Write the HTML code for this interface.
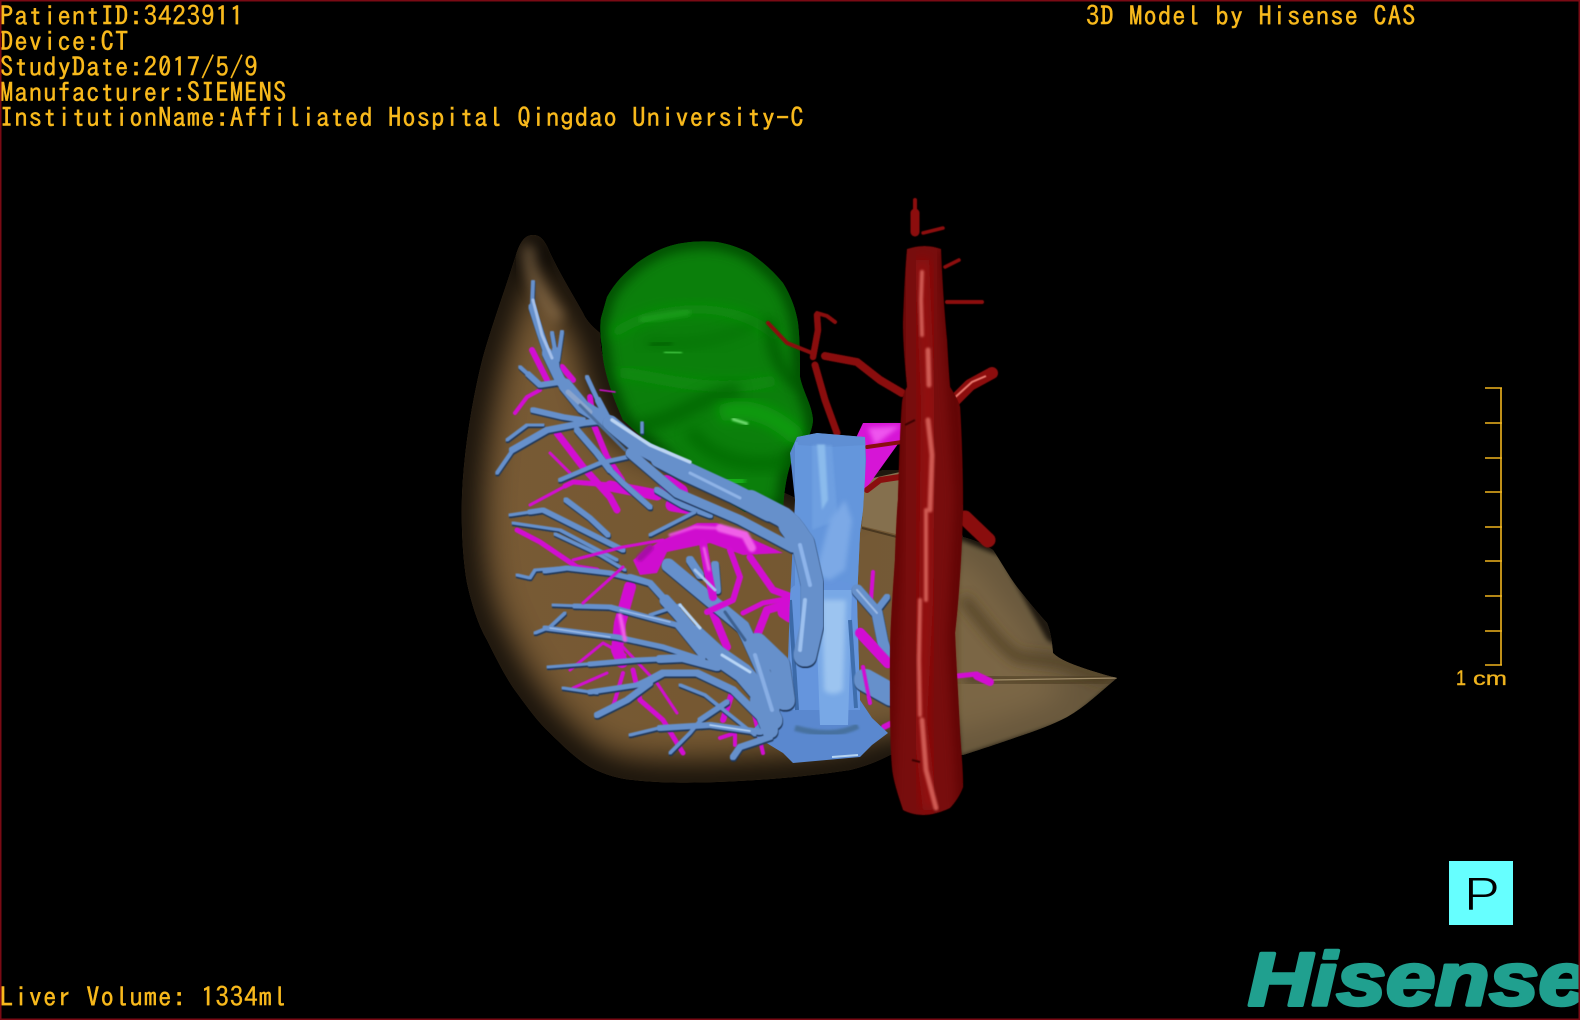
<!DOCTYPE html>
<html lang="en">
<head>
<meta charset="utf-8">
<title>3D Model by Hisense CAS</title>
<style>
html,body{margin:0;padding:0;background:#000;width:1580px;height:1020px;overflow:hidden}
svg{display:block}
.t{font-family:"IPAGothic","Liberation Mono",monospace;font-size:26.5px;letter-spacing:1.12px;fill:#f8b91c;stroke:#f8b91c;stroke-width:.45px}
</style>
</head>
<body>
<svg xmlns="http://www.w3.org/2000/svg" width="1580" height="1020" viewBox="0 0 1580 1020">
<defs>
<filter id="s" x="-10%" y="-10%" width="120%" height="120%"><feGaussianBlur stdDeviation=".55"/></filter>
<filter id="fat" x="-5%" y="-5%" width="110%" height="110%"><feMorphology operator="dilate" radius="1"/><feGaussianBlur stdDeviation=".6"/></filter>
<filter id="b1" x="-20%" y="-20%" width="140%" height="140%"><feGaussianBlur stdDeviation="1"/></filter>
<filter id="b2" x="-30%" y="-30%" width="160%" height="160%"><feGaussianBlur stdDeviation="2.5"/></filter>
<filter id="b5" x="-40%" y="-40%" width="180%" height="180%"><feGaussianBlur stdDeviation="6"/></filter>
<filter id="b10" x="-30%" y="-30%" width="160%" height="160%"><feGaussianBlur stdDeviation="17"/></filter>
<linearGradient id="lg" x1="0" x2="1" y1="0" y2="0">
<stop offset="0" stop-color="#785a35"/><stop offset=".45" stop-color="#755831"/><stop offset=".75" stop-color="#735a38"/><stop offset="1" stop-color="#7d6847"/>
</linearGradient>
<path id="liver" d="M533 235C525 235 520 242 516 255C505 290 492 325 483 357C472 400 464 450 462 495C461 530 463 560 467 583C473 610 480 628 487 640C497 660 507 680 517 693C528 708 538 722 550 733C565 748 578 760 590 767C605 775 620 779 633 780C660 783 690 783 717 782C770 780 810 776 850 770C870 765 880 760 890 755L963 755C985 748 1000 743 1017 737C1035 731 1052 725 1067 717C1085 707 1100 692 1117 678C1105 675 1095 672 1083 668C1072 664 1060 660 1053 653C1052 640 1050 630 1047 623C1035 610 1025 597 1017 587C1008 575 1000 560 993 550C985 545 975 540 963 537L940 480L900 470L883 470L860 478L800 500L623 420C612 390 600 360 600 333C590 325 585 318 583 313C570 290 558 270 550 253C545 240 540 235 533 235Z"/>
<clipPath id="cl"><use href="#liver"/></clipPath>
<path id="green" d="M607 297C615 282 626 272 637 263C652 252 668 245 683 243C695 241 706 241 717 242C729 244 740 248 750 253C763 262 774 272 783 283C791 296 796 310 798 323C800 340 800 360 800 377C803 392 812 405 813 420C812 435 803 447 793 457C787 472 784 490 783 510L745 512L690 480L623 420C612 395 603 370 602 347C600 335 600 325 601 318Z"/>
<clipPath id="cg"><use href="#green"/></clipPath>
<path id="red" d="M907 249Q925 243 941 249C942 280 945 320 947 340C948 360 949 375 950 387C955 395 958 400 960 407C962 440 963 480 963 510C962 540 960 590 955 633C956 660 958 690 960 733C961 750 963 770 963 787C960 795 955 803 950 808C942 812 932 815 923 815C916 815 908 813 903 810C898 795 893 780 892 767C890 740 890 700 890 660C890 630 893 590 895 560C896 530 897 510 898 500C899 470 900 430 902 403C903 395 905 390 907 387C905 365 903 340 903 323C904 300 905 270 907 249Z"/>
<clipPath id="cr"><use href="#red"/></clipPath>
<path id="ivc" d="M797 437L817 433L865 437L866 460L863 510L860 533L857 600L860 700L872 718L888 733L872 745L860 757L793 763L783 753L750 733L780 700L787 690L790 600L795 500L790 453Z"/>
<clipPath id="ci"><use href="#ivc"/></clipPath>
<g id="veins" fill="none" stroke-linecap="round" stroke-linejoin="round">
<path stroke-width="2" d="M533 282L532 307L540 332"/>
<path stroke-width="5" d="M532 307L540 332L547 353"/>
<path stroke-width="8" d="M547 353L560 380L583 407"/>
<path stroke-width="11" d="M565 385L583 407L610 423"/>
<path stroke-width="1.5" d="M520 367L530 376"/><path stroke-width="3.5" d="M528 374L540 385L560 382"/>
<path stroke-width="2" d="M552 333L555 350"/><path stroke-width="4" d="M555 350L557 372"/><path stroke-width="2" d="M562 332L558 360"/>
<path stroke-width="3.5" d="M533 410L563 417L583 420"/>
<path stroke-width="1.5" d="M497 473L515 447"/><path stroke-width="4" d="M512 450L547 430L583 423L610 420"/>
<path stroke-width="1" d="M507 440L527 425L543 425"/>
<path stroke-width="2" d="M587 377L593 390L600 405"/><path stroke-width="4" d="M598 400L607 417"/>
<path stroke-width="2" d="M560 480L600 463L627 457"/>
<path stroke-width="4" d="M577 430L597 453L610 470"/>
<path stroke-width="3" d="M610 470L623 483L650 507"/>
<path stroke-width="4" d="M657 490L683 505L710 515"/>
<path stroke-width="1.5" d="M642 423L642 432"/>
<path stroke-width="1" d="M510 515L530 512"/><path stroke-width="3" d="M530 512L543 510L583 530L623 550"/>
<path stroke-width="3" d="M566 500L590 518L608 535"/>
<path stroke-width="1" d="M513 523L560 530L617 560"/>
<path stroke-width="1" d="M555 534L600 555L625 570"/>
<path stroke-width="1" d="M517 575L530 578L535 570L560 568"/>
<path stroke-width="3" d="M545 571L567 568L610 573L650 583"/>
<path stroke-width="4" d="M630 577L650 583L677 613"/>
<path stroke-width="9" d="M665 600L677 613L700 640"/>
<path stroke-width="17" d="M695 635L717 655L743 673L760 693L773 720"/>
<path stroke-width="1" d="M553 605L580 606"/><path stroke-width="3" d="M575 606L610 607L677 625L703 657"/>
<path stroke-width="1" d="M535 633L550 627L565 613"/><path stroke-width="3" d="M545 628L617 637L663 647L703 660"/>
<path stroke-width="1" d="M548 667L600 663"/><path stroke-width="3" d="M590 664L637 660L683 658"/><path stroke-width="6" d="M660 659L683 658L717 667"/>
<path stroke-width="1" d="M563 688L597 693"/><path stroke-width="3" d="M590 692L637 685L663 673"/><path stroke-width="5" d="M650 680L663 673L697 673L733 690L763 720"/>
<path stroke-width="4" d="M597 715L627 700L650 683"/>
<path stroke-width="1" d="M630 735L663 727"/><path stroke-width="4" d="M660 728L710 725L760 732"/>
<path stroke-width="1" d="M670 753L690 733L703 717"/><path stroke-width="3" d="M700 720L727 702"/>
<path stroke-width="1" d="M680 685L705 695L730 715L755 735"/>
<path stroke-width="4" d="M733 757L740 747L770 737"/>
<path stroke-width="11" d="M668 565L710 600L743 627L767 680L773 710"/>
<path stroke-width="6" d="M690 560L700 575"/><path stroke-width="6" d="M715 565L717 590"/>
<path stroke-width="1" d="M650 615L680 605"/>
<path stroke-width="18" d="M757 643L780 665L785 700"/>
<path stroke-width="14" d="M758 700L770 730"/>
<path stroke-width="9" d="M857 590L877 613L883 643L888 657"/>
<path stroke-width="4" d="M877 610L887 597"/>
<path stroke-width="20" d="M865 680L892 695"/>
</g>
<g id="veinsTop" fill="none" stroke-linecap="round" stroke-linejoin="round">
<path stroke-width="13" d="M610 423L637 445L683 470"/>
<path stroke-width="17" d="M660 458L683 470L733 493L770 512"/>
<path stroke-width="18" d="M750 500L783 517Q797 528 803 543L813 583L813 620"/>
<path stroke-width="21" d="M790 525L803 543L812 583L812 625L805 655"/>
<path stroke-width="7" d="M630 453L677 493L740 520L793 548"/>
<path stroke-width="1" d="M650 535L695 512"/>
</g>
<g id="mag" fill="none" stroke="#d20ed2" stroke-linecap="round" stroke-linejoin="round">
<path stroke-width="5" d="M517 530L540 542L577 567L597 570"/>
<path stroke-width="12" d="M630 587L620 623L617 650L622 662"/>
<path stroke-width="8" d="M713 613L727 647"/>
<path stroke-width="7" d="M750 557L773 590L792 597"/>
<path stroke-width="5" d="M792 598L763 603L743 613"/>
<path stroke-width="8" d="M792 603L767 610L758 633"/>
<path stroke-width="13" d="M784 612L790 616"/>
<path stroke-width="5" d="M633 670L640 700L663 720L683 753"/>
<path stroke-width="3" d="M623 647L657 683L677 713"/>
<path stroke-width="3" d="M570 670L603 643L625 655"/>
<path stroke-width="3" d="M573 688L607 673"/>
<path stroke-width="4" d="M613 707L623 673"/>
<path stroke-width="6" d="M723 720L733 690"/>
<path stroke-width="4" d="M763 753L753 710"/>
<path stroke-width="4" d="M720 738L735 733L735 745"/>
<path stroke-width="6" d="M532 350L547 380"/>
<path stroke-width="6" d="M562 367L573 380"/>
<path stroke-width="3" d="M560 345L557 362"/>
<path stroke-width="4" d="M515 413L527 397L540 390"/>
<path stroke-width="7" d="M557 433L583 467L610 497L617 510"/>
<path stroke-width="6" d="M590 397L593 423L607 457L622 480"/>
<path stroke-width="3" d="M530 505L573 482"/><path stroke-width="5" d="M565 486L573 482L610 485"/><path stroke-width="11" d="M610 486L657 495"/>
<path stroke-width="16" d="M667 483L680 492"/>
<path stroke-width="13" d="M672 505L690 508"/>
<path stroke-width="3" d="M550 453L570 473"/>
<path stroke-width="1.5" d="M600 390L615 392"/>
<path stroke-width="10" d="M860 633L888 663"/>
<path stroke-width="3.5" d="M863 667L870 703"/>
<path stroke-width="4" d="M873 572L871 600"/>
<path stroke-width="5" d="M957 676L977 674"/>
<path stroke-width="8" d="M977 676L990 682"/>
<path stroke-width="6" d="M884 727L890 724"/>
</g>
</defs>

<rect width="1580" height="1020" fill="#000"/>

<!-- liver -->
<use href="#liver" fill="url(#lg)"/>
<g clip-path="url(#cl)">
<use href="#liver" fill="none" stroke="#000" stroke-width="36" filter="url(#b10)"/>
<path d="M1000 556L1047 640L1117 680L1070 720L960 756L960 540Z" fill="#7d6a4a" opacity=".8" filter="url(#b2)"/>
<path d="M963 598C985 625 1000 645 1017 657L1060 662L1110 680" fill="none" stroke="#4e3c22" stroke-width="9" filter="url(#b5)"/>
<path d="M963 678L1060 682L1117 678" fill="none" stroke="#4a3a20" stroke-width="10" filter="url(#b5)"/>
<path d="M993 680L1117 678" fill="none" stroke="#a08c68" stroke-width="1.2"/>
<path d="M862 528L897 537" fill="none" stroke="#4a3820" stroke-width="2"/>
<path d="M864 480L900 472L900 535L862 526Z" fill="#85704e"/>
<path d="M530 245C525 260 535 290 560 320" fill="none" stroke="#a08058" stroke-width="14" opacity=".55" filter="url(#b5)"/>
</g>

<!-- gallbladder -->
<use href="#green" fill="#0b7f0b"/>
<g clip-path="url(#cg)">
<use href="#green" fill="none" stroke="#014a01" stroke-width="14" filter="url(#b5)"/>
<path d="M612 335C660 300 740 300 780 340" fill="none" stroke="#0e8f0e" stroke-width="10" filter="url(#b5)"/>
<path d="M640 320L690 312" fill="none" stroke="#1a9c1a" stroke-width="6" filter="url(#b2)"/>
<path d="M645 342C680 345 720 345 760 320" fill="none" stroke="#066a06" stroke-width="6" opacity=".7" filter="url(#b5)"/>
<path d="M620 372C670 380 720 395 775 380" fill="none" stroke="#0e8c0e" stroke-width="12" filter="url(#b5)"/>
<path d="M650 345L672 343" stroke="#056005" stroke-width="4" filter="url(#b2)"/>
<path d="M664 352L682 353" stroke="#3cc03c" stroke-width="3" filter="url(#b1)"/>
<path d="M770 320C772 345 775 370 800 385" fill="none" stroke="#045a04" stroke-width="10" filter="url(#b5)"/>
<path d="M640 425C680 420 700 395 740 390" fill="none" stroke="#066406" stroke-width="14" opacity=".8" filter="url(#b5)"/>
<path d="M720 415C740 405 770 410 800 440" fill="none" stroke="#109c10" stroke-width="18" filter="url(#b5)"/>
<path d="M732 419L748 424" stroke="#7ee87e" stroke-width="3" filter="url(#b1)"/>
<path d="M690 430C710 460 750 470 790 460" fill="none" stroke="#066a06" stroke-width="14" opacity=".8" filter="url(#b5)"/>
<path d="M725 480L745 482" stroke="#18b018" stroke-width="10" filter="url(#b2)"/>
</g>

<!-- hepatic artery branches -->
<g fill="none" stroke="#8a0e0e" stroke-linecap="round" stroke-linejoin="round" filter="url(#s)">
<path stroke-width="7" d="M837 433L825 400L815 365"/>
<path stroke-width="6.5" d="M813 357L818 330L817 315"/>
<path stroke-width="4" d="M817 313L827 316L835 322"/>
<path stroke-width="4" d="M812 353L787 343L768 323"/>
<path stroke-width="8" d="M902 393L880 380L857 362L825 356"/>
<path stroke-width="15" d="M965 518L988 540"/>
</g>

<!-- upper magenta triangle -->
<path d="M863 423L903 423L903 437L865 490L855 480L855 440Z" fill="#d615d6"/>
<path d="M868 428L900 426L875 445Z" fill="#ee55ee" filter="url(#b2)"/>
<path d="M867 447L902 442" fill="none" stroke="#8a0e0e" stroke-width="4" stroke-linecap="round"/>
<path d="M867 490L880 480L900 477" fill="none" stroke="#8a0e0e" stroke-width="6" stroke-linecap="round"/>

<!-- portal vein network -->
<use href="#mag" filter="url(#s)"/>

<!-- inferior vena cava -->
<use href="#ivc" fill="#5a88cf"/>
<g clip-path="url(#ci)">
<rect x="795" y="442" width="70" height="150" fill="#6496dc"/>
<path d="M797 437L817 433L865 437L866 445L830 447L798 445Z" fill="#5f8fd4"/>
<path d="M790 590C800 575 845 575 860 590L860 710L790 710Z" fill="#6595dd"/>
<path d="M815 590L852 590L848 725L820 725Z" fill="#78a8e6"/>
<path d="M822 600L846 600L843 690C838 695 828 695 824 690Z" fill="#9cc4f0" filter="url(#b2)"/>
<path d="M817 445L825 445L828 500L822 510Z" fill="#acdcf8" filter="url(#b1)"/>
<path d="M812 445L832 445L838 520L812 530Z" fill="#75a5e4" opacity=".6" filter="url(#b1)"/>
<path d="M845 500L852 520L845 570L830 580L815 575L830 520Z" fill="#7ba9e6" filter="url(#b2)"/>
<path d="M790 600L797 710" stroke="#3c6aa8" stroke-width="4" fill="none"/>
<path d="M850 620L856 708" stroke="#3f6eac" stroke-width="4" fill="none"/>
<path d="M795 728C820 735 840 735 858 726" stroke="#47719f" stroke-width="6" fill="none" filter="url(#b1)"/>
<path d="M790 745L860 745" stroke="#4a74b0" stroke-width="7" fill="none" filter="url(#b2)"/>
<path d="M832 757L858 755" stroke="#b6d4f2" stroke-width="2" fill="none"/>
</g>

<!-- hepatic veins, lower layer -->
<use href="#veins" stroke="#1d3658" transform="translate(.5 1.6)" filter="url(#fat)"/>
<use href="#veins" stroke="#6690cb" filter="url(#fat)"/>

<!-- portal vein body above the lower veins -->
<g filter="url(#s)">
<path d="M657 543L697 523L717 523L783 553L743 555L710 543L667 552L657 573L640 575L633 560Z" fill="#cf0fcf"/>
<g fill="none" stroke="#d20ed2" stroke-linecap="round" stroke-linejoin="round">
<path stroke-width="3" d="M573 560L623 547L663 540"/>
<path stroke-width="3" d="M583 603L623 567"/>
<path stroke-width="8" d="M703 543L707 567L713 597"/>
<path stroke-width="6" d="M730 550L740 577L733 600L707 612"/>
</g>
</g>
<g fill="none" stroke-linecap="round" filter="url(#b1)">
<path d="M720 528L745 535L752 548" stroke="#f060e8" stroke-width="8"/>
<path d="M670 535L695 527L715 528" stroke="#ec50e4" stroke-width="3"/>
<path d="M620 615L625 640" stroke="#f060e8" stroke-width="4"/>
<path d="M640 558L650 548" stroke="#a80aa8" stroke-width="7"/>
<path d="M704 548L709 570" stroke="#f070e8" stroke-width="2.5"/>
</g>

<!-- hepatic veins, upper trunk -->
<use href="#veinsTop" stroke="#1d3658" transform="translate(.5 1.6)" filter="url(#fat)"/>
<use href="#veinsTop" stroke="#6690cb" filter="url(#fat)"/>

<g fill="none" stroke-linecap="round" stroke-linejoin="round" filter="url(#s)">
<path d="M533 300L542 335L552 358" stroke="#a4c0ea" stroke-width="3"/>
<path d="M568 392L590 412" stroke="#8aa4cc" stroke-width="5"/>
<path d="M612 420L650 445L690 462" stroke="#bcd4f2" stroke-width="3.5"/>
<path d="M690 473L740 498" stroke="#8fb3e6" stroke-width="3"/>
<path d="M580 405L600 425L625 450" stroke="#4e6f9e" stroke-width="3"/>
<path d="M800 545L810 585" stroke="#8db4ea" stroke-width="4"/>
<path d="M805 600L800 650" stroke="#9cc0ee" stroke-width="4"/>
<path d="M680 605L700 628M722 655L750 672" stroke="#b8d6f6" stroke-width="3"/>
<path d="M725 612L745 640" stroke="#3e618f" stroke-width="3"/>
<path d="M755 655L772 710" stroke="#88aee4" stroke-width="4"/>
<path d="M710 725L750 731" stroke="#bcd8f8" stroke-width="1.5"/>
<path d="M620 610L670 622" stroke="#a6c4ee" stroke-width="1.2"/>
<path d="M550 628L610 637" stroke="#a6c4ee" stroke-width="1.2"/>
<path d="M695 570L715 590" stroke="#a6c4ee" stroke-width="3"/>
<path d="M857 590L877 613" stroke="#9dbbe6" stroke-width="2"/>
<path d="M860 633L888 663" stroke="#d20ed2" stroke-width="10"/>
<path d="M863 667L870 703" stroke="#d20ed2" stroke-width="3.5"/>
</g>

<!-- aorta small branches -->
<g fill="none" stroke="#8c0f0f" stroke-linecap="round" stroke-linejoin="round" filter="url(#s)">
<path stroke-width="4" d="M915 200L915 215"/>
<path stroke-width="9" d="M915 213L915 232"/>
<path stroke-width="3.5" d="M923 233L943 228"/>
<path stroke-width="3.5" d="M945 267L959 260"/>
<path stroke-width="4" d="M947 302L965 302L982 302"/>
<path stroke-width="12" d="M950 405L970 385L992 373"/>
</g>
<path d="M951 401L972 382L986 376" fill="none" stroke="#ea7a70" stroke-width="2" filter="url(#s)"/>

<!-- aorta trunk -->
<use href="#red" fill="#780808" filter="url(#s)"/>
<g clip-path="url(#cr)">
<path d="M945 250L962 500L955 640L965 820" stroke="#560404" stroke-width="10" filter="url(#b5)" fill="none"/>
<path d="M900 250L895 560L885 820" stroke="#5c0505" stroke-width="10" filter="url(#b5)" fill="none"/>
<path d="M922 260L928 400L926 600L920 720L930 810" stroke="#971010" stroke-width="14" filter="url(#b5)" fill="none"/>
<g fill="none" stroke="#cf5a52" stroke-linecap="round" filter="url(#b1)">
<path stroke-width="4" d="M922 272L921 300L922 335"/>
<path stroke-width="5" d="M928 350L929 385"/>
<path stroke-width="5" d="M928 420L932 455L930 510"/>
<path stroke-width="4" d="M926 510L926 600"/>
<path stroke-width="4" d="M920 600L919 660L920 715"/>
<path stroke-width="5" d="M922 720L926 770L936 808"/>
</g>
<path d="M905 425L915 420M912 760L920 762" stroke="#3c0202" stroke-width="2" filter="url(#s)"/>
</g>

<!-- text -->
<text class="t" x="0" y="25.5">PatientID:3423911</text>
<text class="t" x="0" y="51">Device:CT</text>
<text class="t" x="0" y="76.5">StudyDate:2017/5/9</text>
<text class="t" x="0" y="102">Manufacturer:SIEMENS</text>
<text class="t" x="0" y="127">InstitutionName:Affiliated Hospital Qingdao University-C</text>
<text class="t" x="1086" y="25.5">3D Model by Hisense CAS</text>
<text class="t" x="0" y="1006.5">Liver Volume: 1334ml</text>

<!-- scale -->
<g stroke="#f0b41e" stroke-width="1.6" fill="none">
<path d="M1501 388V665"/>
<path d="M1485 388H1502M1485 423H1502M1485 458H1502M1485 492H1502M1485 527H1502M1485 561H1502M1485 596H1502M1485 631H1502M1485 665H1502"/>
</g>
<text x="1456" y="685" font-family="'Liberation Sans',sans-serif" font-size="21" fill="#f0b41e" stroke="#f0b41e" stroke-width=".4" textLength="10" lengthAdjust="spacingAndGlyphs">1</text>
<text x="1473" y="685" font-family="'Liberation Sans',sans-serif" font-size="19" fill="#f0b41e" stroke="#f0b41e" stroke-width=".3" textLength="34" lengthAdjust="spacingAndGlyphs">cm</text>

<!-- P box -->
<rect x="1449" y="861" width="64" height="64" fill="#66ffff"/>
<text x="1464" y="910" font-family="'Liberation Sans',sans-serif" font-size="47" fill="#000" stroke="#66ffff" stroke-width="1" textLength="36" lengthAdjust="spacingAndGlyphs">P</text>

<!-- logo -->
<text x="1248" y="1005" font-family="'Liberation Sans',sans-serif" font-weight="700" font-style="italic" font-size="75" fill="#20a08f" stroke="#20a08f" stroke-width="3.5" stroke-linejoin="round" textLength="340" lengthAdjust="spacingAndGlyphs">Hisense</text>

<!-- frame -->
<rect x=".75" y=".75" width="1578.5" height="1018.5" fill="none" stroke="#7a0a14" stroke-width="1.5"/>
</svg>
</body>
</html>
